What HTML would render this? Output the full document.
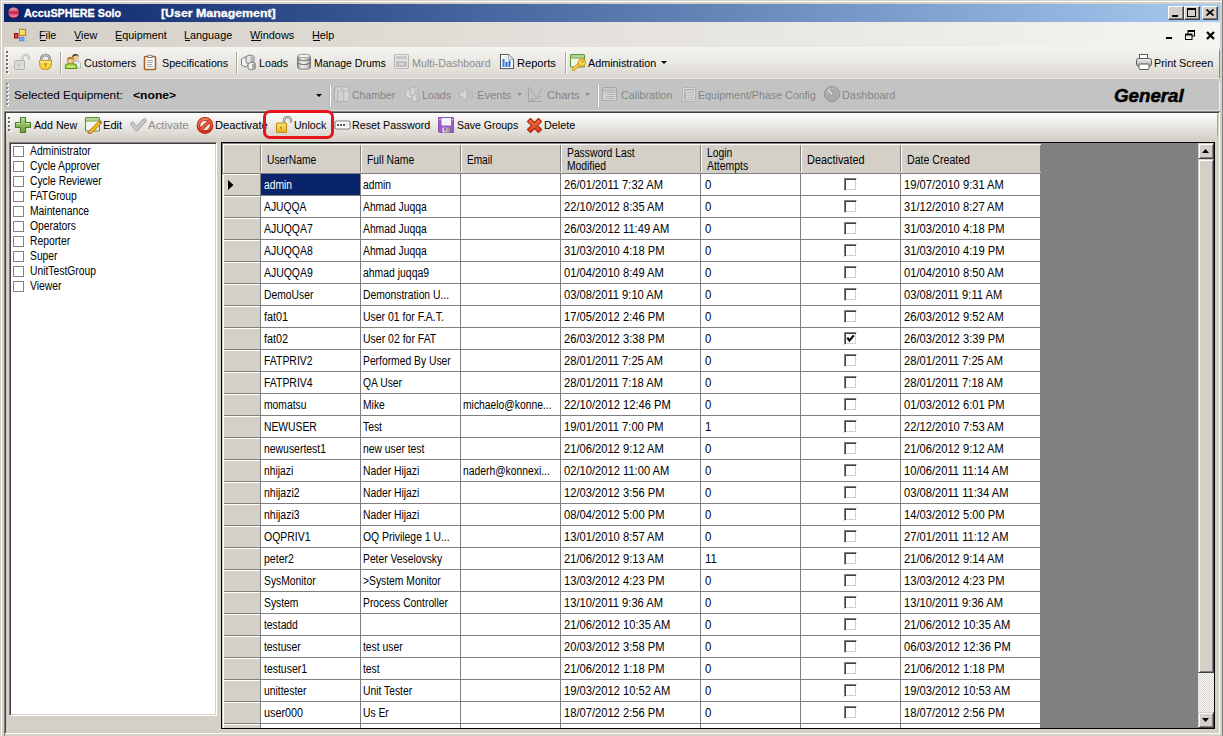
<!DOCTYPE html>
<html><head><meta charset="utf-8"><style>
html,body{margin:0;padding:0;width:1223px;height:736px;overflow:hidden;background:#D4D0C8}
body{position:relative;font-family:"Liberation Sans",sans-serif}
div,svg,span{position:absolute}
span{white-space:pre;line-height:1;transform-origin:0 0}
</style></head><body>
<div style="left:0px;top:0px;width:1223px;height:736px;background:#D4D0C8"></div>
<div style="left:1px;top:1px;width:1221px;height:1px;background:#fff"></div>
<div style="left:1px;top:1px;width:1px;height:735px;background:#fff"></div>
<div style="left:1222px;top:0px;width:1px;height:736px;background:#808080"></div>
<div style="left:4px;top:4px;width:1216px;height:18px;background:linear-gradient(to right,#0A246A,#A6CAF0)"></div>
<svg style="left:8px;top:7px" width="12" height="12" viewBox="0 0 12 12"><defs><linearGradient id="rb" x1="0" y1="0" x2="0" y2="1"><stop offset="0" stop-color="#C86A7A"/><stop offset="0.15" stop-color="#DC9AA8"/><stop offset="0.5" stop-color="#C81E40"/><stop offset="0.85" stop-color="#FF7C9C"/><stop offset="1" stop-color="#E8145A"/></linearGradient></defs><circle cx="5.6" cy="5.6" r="5.3" fill="url(#rb)"/><path d="M1.5 10 A5.3 5.3 0 0 0 9.7 10" stroke="#300818" stroke-width="0.8" fill="none" opacity="0.6"/></svg>
<div style="left:1168px;top:6px;width:16px;height:14px;background:#D4D0C8;box-sizing:border-box;border-top:1px solid #fff;border-left:1px solid #fff;border-right:1px solid #404040;border-bottom:1px solid #404040;box-shadow:inset -1px -1px 0 #808080"></div>
<div style="left:1184px;top:6px;width:16px;height:14px;background:#D4D0C8;box-sizing:border-box;border-top:1px solid #fff;border-left:1px solid #fff;border-right:1px solid #404040;border-bottom:1px solid #404040;box-shadow:inset -1px -1px 0 #808080"></div>
<div style="left:1202px;top:6px;width:16px;height:14px;background:#D4D0C8;box-sizing:border-box;border-top:1px solid #fff;border-left:1px solid #fff;border-right:1px solid #404040;border-bottom:1px solid #404040;box-shadow:inset -1px -1px 0 #808080"></div>
<div style="left:1172px;top:15px;width:6px;height:2px;background:#000"></div>
<div style="left:1187px;top:8px;width:9px;height:9px;box-sizing:border-box;border:1px solid #000;border-top-width:2px"></div>
<svg style="left:1206px;top:9px" width="8" height="7" viewBox="0 0 8 7"><path d="M0.5 0.5 L7.5 6.5 M7.5 0.5 L0.5 6.5" stroke="#000" stroke-width="1.6"/></svg>
<div style="left:4px;top:22px;width:1216px;height:25px;background:linear-gradient(to right,#D4D0C8,#F5F4F1)"></div>
<div style="left:40px;top:40px;width:6px;height:1px;background:#000"></div>
<div style="left:75px;top:40px;width:6px;height:1px;background:#000"></div>
<div style="left:116px;top:40px;width:6px;height:1px;background:#000"></div>
<div style="left:185px;top:40px;width:5px;height:1px;background:#000"></div>
<div style="left:251px;top:40px;width:10px;height:1px;background:#000"></div>
<div style="left:313px;top:40px;width:7px;height:1px;background:#000"></div>
<div style="left:1166px;top:37px;width:6px;height:2px;background:#000"></div>
<svg style="left:1185px;top:30px" width="10" height="10" viewBox="0 0 10 10"><rect x="3" y="0.5" width="6.5" height="5.5" fill="none" stroke="#000"/><rect x="3" y="0.5" width="6.5" height="1.5" fill="#000"/><rect x="0.5" y="4" width="6.5" height="5.5" fill="#F2F1EE" stroke="#000"/><rect x="0.5" y="4" width="6.5" height="1.5" fill="#000"/></svg>
<svg style="left:1206px;top:31px" width="9" height="9" viewBox="0 0 9 9"><path d="M1 1 L8 8 M8 1 L1 8" stroke="#000" stroke-width="2.2"/></svg>
<div style="left:4px;top:47px;width:1215px;height:31px;background:linear-gradient(to bottom,#F5F4F1 0%,#EAE8E3 50%,#DAD7CF 100%)"></div>
<div style="left:4px;top:78px;width:1215px;height:1px;background:#E8E6E0"></div>
<div style="left:1219px;top:50px;width:1px;height:28px;background:#8A8A8A"></div>
<div style="left:6px;top:51px;width:2px;height:2px;background:#6E6E6E;box-shadow:1px 1px 0 #fff"></div>
<div style="left:6px;top:55px;width:2px;height:2px;background:#6E6E6E;box-shadow:1px 1px 0 #fff"></div>
<div style="left:6px;top:59px;width:2px;height:2px;background:#6E6E6E;box-shadow:1px 1px 0 #fff"></div>
<div style="left:6px;top:63px;width:2px;height:2px;background:#6E6E6E;box-shadow:1px 1px 0 #fff"></div>
<div style="left:6px;top:67px;width:2px;height:2px;background:#6E6E6E;box-shadow:1px 1px 0 #fff"></div>
<div style="left:6px;top:71px;width:2px;height:2px;background:#6E6E6E;box-shadow:1px 1px 0 #fff"></div>
<div style="left:60px;top:52px;width:1px;height:22px;background:#A9A7A0"></div>
<div style="left:61px;top:52px;width:1px;height:22px;background:#fff"></div>
<div style="left:236px;top:52px;width:1px;height:22px;background:#A9A7A0"></div>
<div style="left:237px;top:52px;width:1px;height:22px;background:#fff"></div>
<div style="left:565px;top:52px;width:1px;height:22px;background:#A9A7A0"></div>
<div style="left:566px;top:52px;width:1px;height:22px;background:#fff"></div>
<svg style="left:661px;top:61px" width="7" height="4" viewBox="0 0 7 4"><path d="M0 0 H6 L3 3 Z" fill="#000"/></svg>
<div style="left:4px;top:79px;width:1215px;height:31px;background:#C3C3C3"></div>
<div style="left:4px;top:110px;width:1215px;height:1px;background:#E0DED8"></div>
<div style="left:1219px;top:82px;width:1px;height:28px;background:#F4F4F4"></div>
<div style="left:6px;top:83px;width:2px;height:2px;background:#8C8C8C;box-shadow:1px 1px 0 #fff"></div>
<div style="left:6px;top:87px;width:2px;height:2px;background:#8C8C8C;box-shadow:1px 1px 0 #fff"></div>
<div style="left:6px;top:91px;width:2px;height:2px;background:#8C8C8C;box-shadow:1px 1px 0 #fff"></div>
<div style="left:6px;top:95px;width:2px;height:2px;background:#8C8C8C;box-shadow:1px 1px 0 #fff"></div>
<div style="left:6px;top:99px;width:2px;height:2px;background:#8C8C8C;box-shadow:1px 1px 0 #fff"></div>
<div style="left:6px;top:103px;width:2px;height:2px;background:#8C8C8C;box-shadow:1px 1px 0 #fff"></div>
<svg style="left:316px;top:94px" width="7" height="4" viewBox="0 0 7 4"><path d="M0 0 H6 L3 3 Z" fill="#000"/></svg>
<div style="left:329px;top:85px;width:1px;height:22px;background:#B4B4B4"></div>
<div style="left:330px;top:85px;width:1px;height:22px;background:#fff"></div>
<div style="left:597px;top:85px;width:1px;height:22px;background:#B4B4B4"></div>
<div style="left:598px;top:85px;width:1px;height:22px;background:#fff"></div>
<svg style="left:517px;top:93px" width="6" height="4" viewBox="0 0 6 4"><path d="M0 0 H5 L2.5 3 Z" fill="#8E8E8E"/></svg>
<svg style="left:585px;top:93px" width="6" height="4" viewBox="0 0 6 4"><path d="M0 0 H5 L2.5 3 Z" fill="#8E8E8E"/></svg>
<div style="left:4px;top:111px;width:1216px;height:1px;background:#808080"></div>
<div style="left:5px;top:112px;width:1214px;height:1px;background:#404040"></div>
<div style="left:4px;top:111px;width:1px;height:625px;background:#808080"></div>
<div style="left:5px;top:112px;width:1px;height:621px;background:#404040"></div>
<div style="left:5px;top:733px;width:1215px;height:1px;background:#fff"></div>
<div style="left:1219px;top:112px;width:1px;height:622px;background:#fff"></div>
<div style="left:6px;top:113px;width:1211px;height:25px;background:linear-gradient(to bottom,#FDFDFC 0%,#EDEBE7 45%,#D6D3CB 100%)"></div>
<div style="left:8px;top:117px;width:2px;height:2px;background:#6E6E6E;box-shadow:1px 1px 0 #fff"></div>
<div style="left:8px;top:121px;width:2px;height:2px;background:#6E6E6E;box-shadow:1px 1px 0 #fff"></div>
<div style="left:8px;top:125px;width:2px;height:2px;background:#6E6E6E;box-shadow:1px 1px 0 #fff"></div>
<div style="left:8px;top:129px;width:2px;height:2px;background:#6E6E6E;box-shadow:1px 1px 0 #fff"></div>
<div style="left:1217px;top:115px;width:1px;height:21px;background:#A8A8A8"></div>
<div style="left:9px;top:142px;width:208px;height:574px;background:#fff;box-sizing:border-box;border-style:solid;border-width:1px;border-color:#808080 #fff #fff #808080;box-shadow:inset 1px 1px 0 #404040, inset -1px -1px 0 #D4D0C8"></div>
<div style="left:13px;top:146px;width:11px;height:11px;box-sizing:border-box;border:1px solid #848284;background:#fff"></div>
<div style="left:13px;top:161px;width:11px;height:11px;box-sizing:border-box;border:1px solid #848284;background:#fff"></div>
<div style="left:13px;top:176px;width:11px;height:11px;box-sizing:border-box;border:1px solid #848284;background:#fff"></div>
<div style="left:13px;top:191px;width:11px;height:11px;box-sizing:border-box;border:1px solid #848284;background:#fff"></div>
<div style="left:13px;top:206px;width:11px;height:11px;box-sizing:border-box;border:1px solid #848284;background:#fff"></div>
<div style="left:13px;top:221px;width:11px;height:11px;box-sizing:border-box;border:1px solid #848284;background:#fff"></div>
<div style="left:13px;top:236px;width:11px;height:11px;box-sizing:border-box;border:1px solid #848284;background:#fff"></div>
<div style="left:13px;top:251px;width:11px;height:11px;box-sizing:border-box;border:1px solid #848284;background:#fff"></div>
<div style="left:13px;top:266px;width:11px;height:11px;box-sizing:border-box;border:1px solid #848284;background:#fff"></div>
<div style="left:13px;top:281px;width:11px;height:11px;box-sizing:border-box;border:1px solid #848284;background:#fff"></div>
<div style="left:221px;top:142px;width:994px;height:587px;background:#808080;box-sizing:border-box;border:1px solid #000"></div>
<div style="left:222px;top:143px;width:819px;height:31px;background:#D4D0C8"></div>
<div style="left:222px;top:143px;width:819px;height:1px;background:#808080"></div>
<div style="left:222px;top:143px;width:1px;height:585px;background:#808080"></div>
<div style="left:223px;top:144px;width:818px;height:1px;background:#fff"></div>
<div style="left:223px;top:144px;width:1px;height:29px;background:#fff"></div>
<div style="left:223px;top:173px;width:818px;height:1px;background:#808080"></div>
<div style="left:260px;top:145px;width:1px;height:27px;background:#808080"></div>
<div style="left:261px;top:145px;width:1px;height:27px;background:#fff"></div>
<div style="left:360px;top:145px;width:1px;height:27px;background:#808080"></div>
<div style="left:361px;top:145px;width:1px;height:27px;background:#fff"></div>
<div style="left:460px;top:145px;width:1px;height:27px;background:#808080"></div>
<div style="left:461px;top:145px;width:1px;height:27px;background:#fff"></div>
<div style="left:560px;top:145px;width:1px;height:27px;background:#808080"></div>
<div style="left:561px;top:145px;width:1px;height:27px;background:#fff"></div>
<div style="left:700px;top:145px;width:1px;height:27px;background:#808080"></div>
<div style="left:701px;top:145px;width:1px;height:27px;background:#fff"></div>
<div style="left:800px;top:145px;width:1px;height:27px;background:#808080"></div>
<div style="left:801px;top:145px;width:1px;height:27px;background:#fff"></div>
<div style="left:900px;top:145px;width:1px;height:27px;background:#808080"></div>
<div style="left:901px;top:145px;width:1px;height:27px;background:#fff"></div>
<div style="left:1040px;top:145px;width:1px;height:27px;background:#808080"></div>
<div style="left:261px;top:174px;width:780px;height:554px;background:#fff"></div>
<div style="left:222px;top:174px;width:39px;height:554px;background:#D4D0C8"></div>
<div style="left:223px;top:174px;width:37px;height:1px;background:#fff"></div>
<div style="left:223px;top:195px;width:37px;height:1px;background:#808080"></div>
<div style="left:261px;top:195px;width:780px;height:1px;background:#808080"></div>
<div style="left:223px;top:196px;width:37px;height:1px;background:#fff"></div>
<div style="left:223px;top:217px;width:37px;height:1px;background:#808080"></div>
<div style="left:261px;top:217px;width:780px;height:1px;background:#808080"></div>
<div style="left:223px;top:218px;width:37px;height:1px;background:#fff"></div>
<div style="left:223px;top:239px;width:37px;height:1px;background:#808080"></div>
<div style="left:261px;top:239px;width:780px;height:1px;background:#808080"></div>
<div style="left:223px;top:240px;width:37px;height:1px;background:#fff"></div>
<div style="left:223px;top:261px;width:37px;height:1px;background:#808080"></div>
<div style="left:261px;top:261px;width:780px;height:1px;background:#808080"></div>
<div style="left:223px;top:262px;width:37px;height:1px;background:#fff"></div>
<div style="left:223px;top:283px;width:37px;height:1px;background:#808080"></div>
<div style="left:261px;top:283px;width:780px;height:1px;background:#808080"></div>
<div style="left:223px;top:284px;width:37px;height:1px;background:#fff"></div>
<div style="left:223px;top:305px;width:37px;height:1px;background:#808080"></div>
<div style="left:261px;top:305px;width:780px;height:1px;background:#808080"></div>
<div style="left:223px;top:306px;width:37px;height:1px;background:#fff"></div>
<div style="left:223px;top:327px;width:37px;height:1px;background:#808080"></div>
<div style="left:261px;top:327px;width:780px;height:1px;background:#808080"></div>
<div style="left:223px;top:328px;width:37px;height:1px;background:#fff"></div>
<div style="left:223px;top:349px;width:37px;height:1px;background:#808080"></div>
<div style="left:261px;top:349px;width:780px;height:1px;background:#808080"></div>
<div style="left:223px;top:350px;width:37px;height:1px;background:#fff"></div>
<div style="left:223px;top:371px;width:37px;height:1px;background:#808080"></div>
<div style="left:261px;top:371px;width:780px;height:1px;background:#808080"></div>
<div style="left:223px;top:372px;width:37px;height:1px;background:#fff"></div>
<div style="left:223px;top:393px;width:37px;height:1px;background:#808080"></div>
<div style="left:261px;top:393px;width:780px;height:1px;background:#808080"></div>
<div style="left:223px;top:394px;width:37px;height:1px;background:#fff"></div>
<div style="left:223px;top:415px;width:37px;height:1px;background:#808080"></div>
<div style="left:261px;top:415px;width:780px;height:1px;background:#808080"></div>
<div style="left:223px;top:416px;width:37px;height:1px;background:#fff"></div>
<div style="left:223px;top:437px;width:37px;height:1px;background:#808080"></div>
<div style="left:261px;top:437px;width:780px;height:1px;background:#808080"></div>
<div style="left:223px;top:438px;width:37px;height:1px;background:#fff"></div>
<div style="left:223px;top:459px;width:37px;height:1px;background:#808080"></div>
<div style="left:261px;top:459px;width:780px;height:1px;background:#808080"></div>
<div style="left:223px;top:460px;width:37px;height:1px;background:#fff"></div>
<div style="left:223px;top:481px;width:37px;height:1px;background:#808080"></div>
<div style="left:261px;top:481px;width:780px;height:1px;background:#808080"></div>
<div style="left:223px;top:482px;width:37px;height:1px;background:#fff"></div>
<div style="left:223px;top:503px;width:37px;height:1px;background:#808080"></div>
<div style="left:261px;top:503px;width:780px;height:1px;background:#808080"></div>
<div style="left:223px;top:504px;width:37px;height:1px;background:#fff"></div>
<div style="left:223px;top:525px;width:37px;height:1px;background:#808080"></div>
<div style="left:261px;top:525px;width:780px;height:1px;background:#808080"></div>
<div style="left:223px;top:526px;width:37px;height:1px;background:#fff"></div>
<div style="left:223px;top:547px;width:37px;height:1px;background:#808080"></div>
<div style="left:261px;top:547px;width:780px;height:1px;background:#808080"></div>
<div style="left:223px;top:548px;width:37px;height:1px;background:#fff"></div>
<div style="left:223px;top:569px;width:37px;height:1px;background:#808080"></div>
<div style="left:261px;top:569px;width:780px;height:1px;background:#808080"></div>
<div style="left:223px;top:570px;width:37px;height:1px;background:#fff"></div>
<div style="left:223px;top:591px;width:37px;height:1px;background:#808080"></div>
<div style="left:261px;top:591px;width:780px;height:1px;background:#808080"></div>
<div style="left:223px;top:592px;width:37px;height:1px;background:#fff"></div>
<div style="left:223px;top:613px;width:37px;height:1px;background:#808080"></div>
<div style="left:261px;top:613px;width:780px;height:1px;background:#808080"></div>
<div style="left:223px;top:614px;width:37px;height:1px;background:#fff"></div>
<div style="left:223px;top:635px;width:37px;height:1px;background:#808080"></div>
<div style="left:261px;top:635px;width:780px;height:1px;background:#808080"></div>
<div style="left:223px;top:636px;width:37px;height:1px;background:#fff"></div>
<div style="left:223px;top:657px;width:37px;height:1px;background:#808080"></div>
<div style="left:261px;top:657px;width:780px;height:1px;background:#808080"></div>
<div style="left:223px;top:658px;width:37px;height:1px;background:#fff"></div>
<div style="left:223px;top:679px;width:37px;height:1px;background:#808080"></div>
<div style="left:261px;top:679px;width:780px;height:1px;background:#808080"></div>
<div style="left:223px;top:680px;width:37px;height:1px;background:#fff"></div>
<div style="left:223px;top:701px;width:37px;height:1px;background:#808080"></div>
<div style="left:261px;top:701px;width:780px;height:1px;background:#808080"></div>
<div style="left:223px;top:702px;width:37px;height:1px;background:#fff"></div>
<div style="left:223px;top:723px;width:37px;height:1px;background:#808080"></div>
<div style="left:261px;top:723px;width:780px;height:1px;background:#808080"></div>
<div style="left:223px;top:724px;width:37px;height:1px;background:#fff"></div>
<div style="left:223px;top:174px;width:1px;height:554px;background:#fff"></div>
<div style="left:260px;top:174px;width:1px;height:554px;background:#808080"></div>
<div style="left:360px;top:174px;width:1px;height:554px;background:#808080"></div>
<div style="left:460px;top:174px;width:1px;height:554px;background:#808080"></div>
<div style="left:560px;top:174px;width:1px;height:554px;background:#808080"></div>
<div style="left:700px;top:174px;width:1px;height:554px;background:#808080"></div>
<div style="left:800px;top:174px;width:1px;height:554px;background:#808080"></div>
<div style="left:900px;top:174px;width:1px;height:554px;background:#808080"></div>
<div style="left:1040px;top:174px;width:1px;height:554px;background:#808080"></div>
<div style="left:261px;top:174px;width:99px;height:21px;background:#0A246A"></div>
<svg style="left:228px;top:180px" width="6" height="10" viewBox="0 0 6 10"><path d="M0 0 L5.5 5 L0 10 Z" fill="#000"/></svg>
<div style="left:844px;top:178px;width:13px;height:13px;box-sizing:border-box;border-style:solid;border-width:1px;border-color:#808080 #fff #fff #808080;box-shadow:inset 1px 1px 0 #404040, inset -1px -1px 0 #D4D0C8;background:#fff"></div>
<div style="left:844px;top:200px;width:13px;height:13px;box-sizing:border-box;border-style:solid;border-width:1px;border-color:#808080 #fff #fff #808080;box-shadow:inset 1px 1px 0 #404040, inset -1px -1px 0 #D4D0C8;background:#fff"></div>
<div style="left:844px;top:222px;width:13px;height:13px;box-sizing:border-box;border-style:solid;border-width:1px;border-color:#808080 #fff #fff #808080;box-shadow:inset 1px 1px 0 #404040, inset -1px -1px 0 #D4D0C8;background:#fff"></div>
<div style="left:844px;top:244px;width:13px;height:13px;box-sizing:border-box;border-style:solid;border-width:1px;border-color:#808080 #fff #fff #808080;box-shadow:inset 1px 1px 0 #404040, inset -1px -1px 0 #D4D0C8;background:#fff"></div>
<div style="left:844px;top:266px;width:13px;height:13px;box-sizing:border-box;border-style:solid;border-width:1px;border-color:#808080 #fff #fff #808080;box-shadow:inset 1px 1px 0 #404040, inset -1px -1px 0 #D4D0C8;background:#fff"></div>
<div style="left:844px;top:288px;width:13px;height:13px;box-sizing:border-box;border-style:solid;border-width:1px;border-color:#808080 #fff #fff #808080;box-shadow:inset 1px 1px 0 #404040, inset -1px -1px 0 #D4D0C8;background:#fff"></div>
<div style="left:844px;top:310px;width:13px;height:13px;box-sizing:border-box;border-style:solid;border-width:1px;border-color:#808080 #fff #fff #808080;box-shadow:inset 1px 1px 0 #404040, inset -1px -1px 0 #D4D0C8;background:#fff"></div>
<div style="left:844px;top:332px;width:13px;height:13px;box-sizing:border-box;border-style:solid;border-width:1px;border-color:#808080 #fff #fff #808080;box-shadow:inset 1px 1px 0 #404040, inset -1px -1px 0 #D4D0C8;background:#fff"></div>
<svg style="left:844px;top:332px" width="13" height="13" viewBox="0 0 13 13"><path d="M3.3 5.6 L5.4 8.6 L9.8 3.4" stroke="#000" stroke-width="2.1" fill="none"/></svg>
<div style="left:844px;top:354px;width:13px;height:13px;box-sizing:border-box;border-style:solid;border-width:1px;border-color:#808080 #fff #fff #808080;box-shadow:inset 1px 1px 0 #404040, inset -1px -1px 0 #D4D0C8;background:#fff"></div>
<div style="left:844px;top:376px;width:13px;height:13px;box-sizing:border-box;border-style:solid;border-width:1px;border-color:#808080 #fff #fff #808080;box-shadow:inset 1px 1px 0 #404040, inset -1px -1px 0 #D4D0C8;background:#fff"></div>
<div style="left:844px;top:398px;width:13px;height:13px;box-sizing:border-box;border-style:solid;border-width:1px;border-color:#808080 #fff #fff #808080;box-shadow:inset 1px 1px 0 #404040, inset -1px -1px 0 #D4D0C8;background:#fff"></div>
<div style="left:844px;top:420px;width:13px;height:13px;box-sizing:border-box;border-style:solid;border-width:1px;border-color:#808080 #fff #fff #808080;box-shadow:inset 1px 1px 0 #404040, inset -1px -1px 0 #D4D0C8;background:#fff"></div>
<div style="left:844px;top:442px;width:13px;height:13px;box-sizing:border-box;border-style:solid;border-width:1px;border-color:#808080 #fff #fff #808080;box-shadow:inset 1px 1px 0 #404040, inset -1px -1px 0 #D4D0C8;background:#fff"></div>
<div style="left:844px;top:464px;width:13px;height:13px;box-sizing:border-box;border-style:solid;border-width:1px;border-color:#808080 #fff #fff #808080;box-shadow:inset 1px 1px 0 #404040, inset -1px -1px 0 #D4D0C8;background:#fff"></div>
<div style="left:844px;top:486px;width:13px;height:13px;box-sizing:border-box;border-style:solid;border-width:1px;border-color:#808080 #fff #fff #808080;box-shadow:inset 1px 1px 0 #404040, inset -1px -1px 0 #D4D0C8;background:#fff"></div>
<div style="left:844px;top:508px;width:13px;height:13px;box-sizing:border-box;border-style:solid;border-width:1px;border-color:#808080 #fff #fff #808080;box-shadow:inset 1px 1px 0 #404040, inset -1px -1px 0 #D4D0C8;background:#fff"></div>
<div style="left:844px;top:530px;width:13px;height:13px;box-sizing:border-box;border-style:solid;border-width:1px;border-color:#808080 #fff #fff #808080;box-shadow:inset 1px 1px 0 #404040, inset -1px -1px 0 #D4D0C8;background:#fff"></div>
<div style="left:844px;top:552px;width:13px;height:13px;box-sizing:border-box;border-style:solid;border-width:1px;border-color:#808080 #fff #fff #808080;box-shadow:inset 1px 1px 0 #404040, inset -1px -1px 0 #D4D0C8;background:#fff"></div>
<div style="left:844px;top:574px;width:13px;height:13px;box-sizing:border-box;border-style:solid;border-width:1px;border-color:#808080 #fff #fff #808080;box-shadow:inset 1px 1px 0 #404040, inset -1px -1px 0 #D4D0C8;background:#fff"></div>
<div style="left:844px;top:596px;width:13px;height:13px;box-sizing:border-box;border-style:solid;border-width:1px;border-color:#808080 #fff #fff #808080;box-shadow:inset 1px 1px 0 #404040, inset -1px -1px 0 #D4D0C8;background:#fff"></div>
<div style="left:844px;top:618px;width:13px;height:13px;box-sizing:border-box;border-style:solid;border-width:1px;border-color:#808080 #fff #fff #808080;box-shadow:inset 1px 1px 0 #404040, inset -1px -1px 0 #D4D0C8;background:#fff"></div>
<div style="left:844px;top:640px;width:13px;height:13px;box-sizing:border-box;border-style:solid;border-width:1px;border-color:#808080 #fff #fff #808080;box-shadow:inset 1px 1px 0 #404040, inset -1px -1px 0 #D4D0C8;background:#fff"></div>
<div style="left:844px;top:662px;width:13px;height:13px;box-sizing:border-box;border-style:solid;border-width:1px;border-color:#808080 #fff #fff #808080;box-shadow:inset 1px 1px 0 #404040, inset -1px -1px 0 #D4D0C8;background:#fff"></div>
<div style="left:844px;top:684px;width:13px;height:13px;box-sizing:border-box;border-style:solid;border-width:1px;border-color:#808080 #fff #fff #808080;box-shadow:inset 1px 1px 0 #404040, inset -1px -1px 0 #D4D0C8;background:#fff"></div>
<div style="left:844px;top:706px;width:13px;height:13px;box-sizing:border-box;border-style:solid;border-width:1px;border-color:#808080 #fff #fff #808080;box-shadow:inset 1px 1px 0 #404040, inset -1px -1px 0 #D4D0C8;background:#fff"></div>
<div style="left:1198px;top:143px;width:16px;height:585px;background:#D4D0C8"></div>
<div style="left:1198px;top:143px;width:16px;height:16px;background:#D4D0C8;box-sizing:border-box;border-style:solid;border-width:1px;border-color:#D4D0C8 #404040 #404040 #D4D0C8;box-shadow:inset 1px 1px 0 #fff, inset -1px -1px 0 #808080"></div>
<div style="left:1198px;top:159px;width:16px;height:514px;background:#D4D0C8;box-sizing:border-box;border-style:solid;border-width:1px;border-color:#D4D0C8 #404040 #404040 #D4D0C8;box-shadow:inset 1px 1px 0 #fff, inset -1px -1px 0 #808080"></div>
<div style="left:1198px;top:673px;width:16px;height:39px;background-color:#fff;background-image:repeating-conic-gradient(#D4D0C8 0 25%,#fff 0 50%);background-size:2px 2px"></div>
<div style="left:1198px;top:712px;width:16px;height:16px;background:#D4D0C8;box-sizing:border-box;border-style:solid;border-width:1px;border-color:#D4D0C8 #404040 #404040 #D4D0C8;box-shadow:inset 1px 1px 0 #fff, inset -1px -1px 0 #808080"></div>
<svg style="left:1202px;top:149px" width="8" height="4" viewBox="0 0 8 4"><path d="M3.5 0 L7 4 L0 4 Z" fill="#000"/></svg>
<svg style="left:1202px;top:718px" width="8" height="4" viewBox="0 0 8 4"><path d="M0 0 L7 0 L3.5 4 Z" fill="#000"/></svg>
<svg style="left:13px;top:28px" width="15" height="15" viewBox="0 0 15 15"><rect x="0.5" y="0.5" width="13" height="13" fill="#DAD8D2" stroke="#C4C6C8"/>
<path d="M0.5 5 H5 M0.5 10 H13.5 M3 0.5 V13.5 M11 10 V13.5" stroke="#D0D0CC" stroke-width="1"/>
<defs><linearGradient id="yg" x1="0" y1="0" x2="1" y2="1"><stop offset="0" stop-color="#FFF0B0"/><stop offset="1" stop-color="#FFC810"/></linearGradient></defs>
<rect x="6.5" y="1.5" width="6" height="6" fill="url(#yg)" stroke="#B88A10"/>
<rect x="1.5" y="5.5" width="3.5" height="4.5" fill="#E04040" stroke="#A01010"/>
<rect x="6.2" y="9.2" width="4.8" height="3.6" fill="#6AA8F0" stroke="#3A78D8" stroke-width="0.6"/></svg>
<svg style="left:13px;top:53px" width="18" height="18" viewBox="0 0 18 18"><path d="M9.5 7.5 V5 A3.2 3.2 0 0 1 16 5 V7" fill="none" stroke="#B4B4B4" stroke-width="2.2"/>
<path d="M9.5 7.5 V5 A3.2 3.2 0 0 1 16 5 V7" fill="none" stroke="#F0F0F0" stroke-width="0.7"/>
<rect x="1.5" y="7.5" width="10" height="9" rx="1" fill="#DADADA" stroke="#B2B2B2"/>
<path d="M6.5 11 L5 12 L6.5 13" stroke="#B8B8B8" fill="none"/></svg>
<svg style="left:38px;top:53px" width="16" height="18" viewBox="0 0 16 18"><path d="M3.2 8 V6.3 A4.3 4.3 0 0 1 11.8 6.3 V8" fill="none" stroke="#7E7E7E" stroke-width="2.6"/>
<path d="M3.2 8 V6.3 A4.3 4.3 0 0 1 11.8 6.3 V8" fill="none" stroke="#E8E8E8" stroke-width="0.9"/>
<path d="M1.5 7.5 H13.5 V10 C13.5 14 11 16.5 7.5 16.5 C4 16.5 1.5 14 1.5 10 Z" fill="#F6D84A" stroke="#D49A10" stroke-width="1.1"/>
<rect x="2.2" y="8.2" width="10.6" height="1.2" fill="#FDF2A8"/>
<circle cx="7.5" cy="11" r="1.2" fill="#C88A10"/><rect x="6.9" y="11" width="1.2" height="2.8" fill="#C88A10"/></svg>
<svg style="left:64px;top:53px" width="18" height="17" viewBox="0 0 18 17"><path d="M8.5 15 V11.5 C8.5 9 10 8 12.5 8 C15 8 16.5 9 16.5 11.5 V15 Z" fill="#E8F0F0" stroke="#A8B4B4"/>
<circle cx="11.5" cy="4.5" r="3.2" fill="#F0C898"/><path d="M8.2 4.5 A3.3 3.3 0 0 1 14.8 4 L14 3 C12 2 10 2.5 8.5 5 Z" fill="#4A3C28"/>
<path d="M1.5 15.5 V13 C1.5 11 3 10.5 6.5 10.5 C10 10.5 12.5 11 12.5 13 V15.5 Z" fill="#A8D448" stroke="#5A9418" stroke-width="1.1"/>
<rect x="3" y="13" width="8" height="1.3" fill="#D4F080"/>
<circle cx="6.5" cy="7.5" r="3.2" fill="#F2CCA0" stroke="#B8801C" stroke-width="0.8"/><path d="M3.2 7.5 A3.3 3.3 0 0 1 9.8 7 C8 5.5 5 5.5 3.2 7.5 Z" fill="#B07A1C"/></svg>
<svg style="left:143px;top:54px" width="15" height="17" viewBox="0 0 15 17"><rect x="1.5" y="2.5" width="11" height="13" rx="1" fill="#fff" stroke="#A8621E" stroke-width="1.6"/>
<rect x="3" y="4" width="8" height="10" fill="#FCFCFC"/>
<path d="M4.5 3.5 V2 H6 A1 1 0 0 1 8 2 H9.5 V3.5 Z" fill="#fff" stroke="#7A7A7A"/>
<path d="M4 6.5 H10 M4 8.5 H10 M4 10.5 H9 M4 12.5 H10" stroke="#9A9A9A" stroke-width="0.9"/></svg>
<svg style="left:240px;top:54px" width="17" height="17" viewBox="0 0 17 17"><path d="M1.5 5 L5 3 L9 5 V11 L5 13 L1.5 11 Z" fill="#F4F4F4" stroke="#7C7C7C"/>
<path d="M6 2.5 L10 0.8 L14 2.5 V8.5 L10 10.5 L6 8.5 Z" fill="#E6E6E6" stroke="#7C7C7C"/>
<path d="M10.5 2.5 L14 2.5 V8.5 L10.5 10 Z" fill="#B4B4B4"/>
<path d="M8 9.5 L12 8 L15.5 9.5 V14.5 L12 16 L8 14.5 Z" fill="#F2F2F2" stroke="#7C7C7C"/>
<path d="M12 9.7 L15.5 9.5 V14.5 L12 16 Z" fill="#A8A8A8"/></svg>
<svg style="left:296px;top:53px" width="16" height="17" viewBox="0 0 16 17"><defs><linearGradient id="dg" x1="0" x2="1"><stop offset="0" stop-color="#9A9A9A"/><stop offset="0.35" stop-color="#F4F4F4"/><stop offset="0.7" stop-color="#D8D8D8"/><stop offset="1" stop-color="#8C8C8C"/></linearGradient></defs>
<rect x="1.5" y="2" width="13" height="14" rx="3" fill="url(#dg)" stroke="#7A7A7A"/>
<ellipse cx="8" cy="3" rx="6.3" ry="1.8" fill="#F0F0F0" stroke="#8A8A8A" stroke-width="0.8"/>
<path d="M1.8 6.5 Q8 9 14.2 6.5 M1.8 10.5 Q8 13 14.2 10.5" stroke="#6E6E6E" fill="none" stroke-width="1"/></svg>
<svg style="left:393px;top:53px" width="17" height="17" viewBox="0 0 17 17"><rect x="1.5" y="1.5" width="14" height="14" rx="1.5" fill="#EAEAEA" stroke="#B8B8B8" stroke-width="1.2"/>
<rect x="3" y="3" width="11" height="3.5" fill="#C8C8C8"/><rect x="3" y="8" width="11" height="6" fill="#BEBEBE"/><rect x="6" y="10.5" width="5" height="1" fill="#F2F2F2"/></svg>
<svg style="left:499px;top:53px" width="16" height="17" viewBox="0 0 16 17"><path d="M1.5 1.5 H9.5 L14.5 6.5 V15.5 H1.5 Z" fill="#fff" stroke="#5A5A5A" stroke-width="1.1"/>
<path d="M9.5 1.5 V6.5 H14.5" fill="#E8E8E8" stroke="#9A9A9A" stroke-width="0.7"/>
<rect x="3.5" y="3" width="5" height="11" fill="#ECECEC"/>
<rect x="3.5" y="6" width="2" height="8" fill="#3A82E0"/><rect x="6.5" y="9" width="2" height="5" fill="#2A6CD0"/><rect x="9.5" y="7.5" width="2" height="6.5" fill="#2A6CD0"/></svg>
<svg style="left:569px;top:53px" width="18" height="18" viewBox="0 0 18 18"><rect x="1.5" y="1.5" width="14" height="12.5" rx="1" fill="#F4F8EC" stroke="#5C9A34" stroke-width="1.1"/>
<rect x="2" y="2" width="13" height="2.6" fill="#B4D49C"/>
<path d="M2 5 H15" stroke="#6AA040"/>
<path d="M4.5 16.5 L10 11" stroke="#D49A10" stroke-width="3.2" stroke-linecap="round"/>
<path d="M4.5 16.5 L10 11" stroke="#F8D860" stroke-width="1.6" stroke-linecap="round"/>
<circle cx="12.8" cy="9.5" r="3.6" fill="#F8D860" stroke="#D49A10" stroke-width="1.1"/><circle cx="13.5" cy="8.7" r="0.9" fill="#B07A10"/></svg>
<svg style="left:1135px;top:53px" width="18" height="18" viewBox="0 0 18 18"><rect x="4.5" y="1.5" width="8" height="6" fill="#fff" stroke="#5E5E5E"/>
<defs><linearGradient id="pg" x1="0" y1="0" x2="0" y2="1"><stop offset="0" stop-color="#F4F4F4"/><stop offset="1" stop-color="#A8A8A8"/></linearGradient></defs>
<rect x="1.5" y="5.5" width="15" height="7.5" rx="2" fill="url(#pg)" stroke="#5E5E5E"/>
<rect x="4" y="11" width="10" height="5.5" rx="1" fill="#fff" stroke="#5E5E5E"/></svg>
<svg style="left:333px;top:86px" width="17" height="17" viewBox="0 0 17 17"><path d="M1.5 2.5 L4 0.8 H14 L16 3 V14.5 L15 15.5 H4.5 L1.5 13 Z" fill="#D6D6D6" stroke="#ACACAC"/>
<path d="M4.5 15.5 V5 H16 M4.5 5 L1.8 2.6 M10.2 5 V15.5 M10.2 5 L7.5 1" stroke="#B0B0B0" fill="none"/>
<rect x="5" y="5.5" width="5" height="9.5" fill="#CFCFCF"/><rect x="10.7" y="5.5" width="5" height="9.5" fill="#D2D2D2"/></svg>
<svg style="left:404px;top:86px" width="17" height="17" viewBox="0 0 17 17"><path d="M1.5 5 L5 3 L9 5 V11 L5 13 L1.5 11 Z" fill="#D8D8D8" stroke="#B0B0B0"/>
<path d="M6 2.5 L10 0.8 L14 2.5 V8.5 L10 10.5 L6 8.5 Z" fill="#D4D4D4" stroke="#B0B0B0"/>
<path d="M10.5 2.5 L14 2.5 V8.5 L10.5 10 Z" fill="#C4C4C4"/>
<path d="M8 9.5 L12 8 L15.5 9.5 V14.5 L12 16 L8 14.5 Z" fill="#D8D8D8" stroke="#B0B0B0"/>
<path d="M12 9.7 L15.5 9.5 V14.5 L12 16 Z" fill="#BEBEBE"/></svg>
<svg style="left:458px;top:86px" width="17" height="17" viewBox="0 0 17 17"><path d="M1.5 6 H4.5 L9 2 V15 L4.5 11 H1.5 Z" fill="#D6D6D6" stroke="#B0B0B0"/>
<path d="M11 5.5 Q13 8.5 11 11.5 M13 3.5 Q16.5 8.5 13 13.5" stroke="#B4B4B4" fill="none" stroke-width="1.1"/></svg>
<svg style="left:527px;top:86px" width="17" height="17" viewBox="0 0 17 17"><path d="M1.5 1 V15.5 H16" stroke="#A4A4A4" fill="none" stroke-width="1.1"/>
<path d="M3.5 2 Q9 19 15 2" stroke="#A4A4A4" fill="none" stroke-width="0.9"/>
<path d="M3.5 13.5 Q10 13 15 10" stroke="#A4A4A4" fill="none" stroke-width="0.9"/>
<path d="M3 14 H7" stroke="#A0A0A0" stroke-width="1"/></svg>
<svg style="left:601px;top:86px" width="17" height="16" viewBox="0 0 17 16"><rect x="1.5" y="1.5" width="14" height="13" rx="0.8" fill="#DADADA" stroke="#A8A8A8" stroke-width="1.2"/>
<rect x="2.1" y="2.1" width="12.8" height="2.3" fill="#C6C6C6"/><path d="M2 4.8 H15" stroke="#ACACAC"/>
<path d="M3.5 6.5 H4.5 M5.5 6.5 H14 M3.5 8.5 H4.5 M5.5 8.5 H14 M3.5 10.5 H4.5 M5.5 10.5 H14 M3.5 12.5 H4.5 M5.5 12.5 H14" stroke="#AAAAAA" stroke-width="0.9"/></svg>
<svg style="left:681px;top:86px" width="16" height="17" viewBox="0 0 16 17"><rect x="1.5" y="1.5" width="13" height="14" rx="1" fill="#D8D8D8" stroke="#B4B4B4"/>
<rect x="3" y="3" width="10" height="1.5" fill="#AEAEAE"/><rect x="3" y="5.5" width="2" height="7" fill="#B0B0B0"/>
<path d="M6 6.5 H13 M6 9 H13 M6 11.5 H13 M3 13.7 H13" stroke="#B8B8B8"/></svg>
<svg style="left:823px;top:85px" width="18" height="18" viewBox="0 0 18 18"><circle cx="9" cy="9" r="7.7" fill="#A9A9A9" stroke="#999" stroke-width="1"/>
<path d="M5 5 L9 9" stroke="#E4E4E4" stroke-width="1.3"/>
<circle cx="6.5" cy="3.5" r="0.6" fill="#E0E0E0"/><circle cx="10" cy="3.2" r="0.6" fill="#E0E0E0"/><circle cx="13" cy="5" r="0.6" fill="#E0E0E0"/><circle cx="14" cy="8" r="0.6" fill="#E0E0E0"/><circle cx="3.5" cy="8" r="0.6" fill="#E0E0E0"/></svg>
<svg style="left:14px;top:116px" width="18" height="18" viewBox="0 0 18 18"><defs><linearGradient id="ag" x1="0" y1="0" x2="0" y2="1"><stop offset="0" stop-color="#B6D690"/><stop offset="1" stop-color="#6E9E3C"/></linearGradient></defs>
<path d="M6.5 1.5 H11.5 V6.5 H16.5 V11.5 H11.5 V16.5 H6.5 V11.5 H1.5 V6.5 H6.5 Z" fill="url(#ag)" stroke="#4E7E22" stroke-width="1.2" stroke-linejoin="round"/>
<path d="M7.5 2.5 H10.5 M2.5 7.5 H6 M12 7.5 H15.5" stroke="#DCEEC4" stroke-width="0.9"/></svg>
<svg style="left:84px;top:116px" width="18" height="18" viewBox="0 0 18 18"><rect x="1.5" y="1.5" width="14" height="13.5" rx="1" fill="#F2F6EA" stroke="#5C9434" stroke-width="1.1"/>
<rect x="2" y="2" width="13" height="2.6" fill="#B4D09C"/><path d="M2 5 H15" stroke="#6A9A40"/>
<path d="M6 16.5 L16 6.5" stroke="#C07830" stroke-width="4" stroke-linecap="square"/>
<path d="M6.3 16.2 L15.7 6.8" stroke="#F0C800" stroke-width="2.2"/>
<path d="M5 17.5 L6.5 14 L8.5 16 Z" fill="#F8E4C8" stroke="#C07830" stroke-width="0.6"/></svg>
<svg style="left:129px;top:118px" width="18" height="15" viewBox="0 0 18 15"><path d="M3.5 6 L7.5 11 L15.5 2.5" fill="none" stroke="#A8A8A8" stroke-width="4.4" stroke-linejoin="round" stroke-linecap="round"/>
<path d="M3.5 6 L7.5 11 L15.5 2.5" fill="none" stroke="#CBCBCB" stroke-width="2.4" stroke-linejoin="round" stroke-linecap="round"/></svg>
<svg style="left:196px;top:116px" width="18" height="18" viewBox="0 0 18 18"><defs><linearGradient id="rg" x1="0" y1="0" x2="0" y2="1"><stop offset="0" stop-color="#F08858"/><stop offset="1" stop-color="#D03010"/></linearGradient></defs>
<circle cx="9" cy="9.5" r="6.6" fill="none" stroke="#B81E0E" stroke-width="3.6"/>
<circle cx="9" cy="9.5" r="6.6" fill="none" stroke="url(#rg)" stroke-width="2"/>
<path d="M13.5 5 L4.5 14" stroke="#B81E0E" stroke-width="3.4"/><path d="M13.5 5 L4.5 14" stroke="#E8603A" stroke-width="1.8"/></svg>
<svg style="left:275px;top:116px" width="18" height="18" viewBox="0 0 18 18"><path d="M9 8 V4.5 A3.5 3.5 0 0 1 16 4.5 V6.5" fill="none" stroke="#7E7E7E" stroke-width="2.4"/>
<path d="M9 8 V4.5 A3.5 3.5 0 0 1 16 4.5 V6.5" fill="none" stroke="#E8E8E8" stroke-width="0.8"/>
<defs><linearGradient id="gg" x1="0" y1="0" x2="0" y2="1"><stop offset="0" stop-color="#FCE680"/><stop offset="1" stop-color="#E0B020"/></linearGradient></defs>
<rect x="1.5" y="7" width="10" height="9.5" rx="1" fill="url(#gg)" stroke="#C8900E" stroke-width="1.1"/>
<path d="M6.5 10.5 L5 11.8 L6.5 13" fill="#B07A10" stroke="#B07A10" stroke-width="0.8"/></svg>
<svg style="left:334px;top:120px" width="17" height="10" viewBox="0 0 17 10"><rect x="1" y="1" width="15" height="8" rx="1.5" fill="#fff" stroke="#7E7E7E" stroke-width="1.1"/>
<rect x="3" y="4" width="2" height="2" fill="#5A5A5A"/><rect x="6" y="4" width="2" height="2" fill="#5A5A5A"/><rect x="9" y="4" width="2" height="2" fill="#5A5A5A"/><rect x="11.5" y="3" width="3" height="4" fill="#ECECEC"/></svg>
<svg style="left:437px;top:116px" width="18" height="18" viewBox="0 0 18 18"><path d="M1.5 1.5 H16.5 V16.5 H2.5 L1.5 15.5 Z" fill="#9A5AC8" stroke="#8040B0" stroke-width="0.8"/>
<rect x="4.5" y="2" width="9.5" height="7.5" fill="#F2F4F8"/>
<rect x="2.5" y="3" width="1" height="1.2" fill="#fff"/><rect x="14.8" y="3" width="1" height="1.2" fill="#fff"/>
<defs><linearGradient id="sg" x1="0" x2="1"><stop offset="0" stop-color="#F0F0F0"/><stop offset="1" stop-color="#808080"/></linearGradient></defs>
<rect x="5.5" y="11.5" width="8" height="5" fill="url(#sg)"/><rect x="7" y="11.5" width="1.8" height="3.5" fill="#9A5AC8"/></svg>
<svg style="left:526px;top:117px" width="17" height="17" viewBox="0 0 17 17"><defs><linearGradient id="xg" x1="0" y1="0" x2="0" y2="1"><stop offset="0" stop-color="#F07840"/><stop offset="1" stop-color="#D03A18"/></linearGradient></defs>
<path d="M1.5 4.5 L4.5 1.5 L8.5 5.5 L12.5 1.5 L15.5 4.5 L11.5 8.5 L15.5 12.5 L12.5 15.5 L8.5 11.5 L4.5 15.5 L1.5 12.5 L5.5 8.5 Z" fill="url(#xg)" stroke="#B82412" stroke-width="1.1" stroke-linejoin="round"/></svg>
<span style="left:23.5px;top:7.69px;font-size:11px;font-weight:bold;color:#fff;transform:scaleX(0.9815);-webkit-text-stroke:0.3px #fff;">AccuSPHERE Solo</span>
<span style="left:160.5px;top:7.69px;font-size:11px;font-weight:bold;color:#fff;transform:scaleX(1.1236);-webkit-text-stroke:0.3px #fff;">[User Management]</span>
<span style="left:38.5px;top:29.69px;font-size:11px;color:#000;transform:scaleX(0.9699);">File</span>
<span style="left:74.0px;top:29.69px;font-size:11px;color:#000;transform:scaleX(0.9807);">View</span>
<span style="left:114.9px;top:29.69px;font-size:11px;color:#000;transform:scaleX(0.9849);">Equipment</span>
<span style="left:183.8px;top:29.69px;font-size:11px;color:#000;transform:scaleX(0.9846);">Language</span>
<span style="left:249.7px;top:29.69px;font-size:11px;color:#000;transform:scaleX(0.9905);">Windows</span>
<span style="left:311.7px;top:29.69px;font-size:11px;color:#000;transform:scaleX(0.9812);">Help</span>
<span style="left:83.5px;top:57.69px;font-size:11px;color:#000;transform:scaleX(0.9814);">Customers</span>
<span style="left:161.5px;top:57.69px;font-size:11px;color:#000;transform:scaleX(0.9753);">Specifications</span>
<span style="left:259.0px;top:57.69px;font-size:11px;color:#000;transform:scaleX(0.9738);">Loads</span>
<span style="left:314.0px;top:57.69px;font-size:11px;color:#000;transform:scaleX(0.9534);">Manage Drums</span>
<span style="left:412.1px;top:57.69px;font-size:11px;color:#8E8C88;transform:scaleX(0.9739);">Multi-Dashboard</span>
<span style="left:516.9px;top:57.69px;font-size:11px;color:#000;transform:scaleX(1.0070);">Reports</span>
<span style="left:588.3px;top:57.69px;font-size:11px;color:#000;transform:scaleX(0.9784);">Administration</span>
<span style="left:1153.5px;top:57.69px;font-size:11px;color:#000;transform:scaleX(0.9780);">Print Screen</span>
<span style="left:13.5px;top:89.69px;font-size:11px;color:#000;transform:scaleX(1.0708);">Selected Equipment:</span>
<span style="left:132.5px;top:89.69px;font-size:11px;font-weight:bold;color:#000;transform:scaleX(1.1042);">&lt;none&gt;</span>
<span style="left:352.1px;top:89.69px;font-size:11px;color:#858585;transform:scaleX(0.9547);">Chamber</span>
<span style="left:421.8px;top:89.69px;font-size:11px;color:#858585;transform:scaleX(0.9738);">Loads</span>
<span style="left:476.5px;top:89.69px;font-size:11px;color:#858585;transform:scaleX(1.0166);">Events</span>
<span style="left:546.5px;top:89.69px;font-size:11px;color:#858585;transform:scaleX(1.0060);">Charts</span>
<span style="left:620.5px;top:89.69px;font-size:11px;color:#858585;transform:scaleX(0.9735);">Calibration</span>
<span style="left:697.9px;top:89.69px;font-size:11px;color:#858585;transform:scaleX(0.9681);">Equipment/Phase Config</span>
<span style="left:841.5px;top:89.69px;font-size:11px;color:#858585;transform:scaleX(0.9883);">Dashboard</span>
<span style="left:1114.1px;top:87.59px;font-size:17.5px;font-weight:bold;font-style:italic;color:#000;transform:scaleX(1.0692);-webkit-text-stroke:0.5px #000;">General</span>
<span style="left:33.5px;top:119.69px;font-size:11px;color:#000;transform:scaleX(0.9677);">Add New</span>
<span style="left:103.1px;top:119.69px;font-size:11px;color:#000;transform:scaleX(1.0122);">Edit</span>
<span style="left:148.2px;top:119.69px;font-size:11px;color:#8E8C88;transform:scaleX(1.0398);">Activate</span>
<span style="left:215.0px;top:119.69px;font-size:11px;color:#000;transform:scaleX(1.0138);">Deactivate</span>
<span style="left:294.1px;top:119.69px;font-size:11px;color:#000;transform:scaleX(0.9576);">Unlock</span>
<span style="left:351.8px;top:119.69px;font-size:11px;color:#000;transform:scaleX(0.9764);">Reset Password</span>
<span style="left:456.5px;top:119.69px;font-size:11px;color:#000;transform:scaleX(0.9532);">Save Groups</span>
<span style="left:544.2px;top:119.69px;font-size:11px;color:#000;transform:scaleX(0.9812);">Delete</span>
<span style="left:30px;top:144.84px;font-size:12px;color:#000;transform:scaleX(0.8600);">Administrator</span>
<span style="left:30px;top:159.84px;font-size:12px;color:#000;transform:scaleX(0.8600);">Cycle Approver</span>
<span style="left:30px;top:174.84px;font-size:12px;color:#000;transform:scaleX(0.8600);">Cycle Reviewer</span>
<span style="left:30px;top:189.84px;font-size:12px;color:#000;transform:scaleX(0.8600);">FATGroup</span>
<span style="left:30px;top:204.84px;font-size:12px;color:#000;transform:scaleX(0.8600);">Maintenance</span>
<span style="left:30px;top:219.84px;font-size:12px;color:#000;transform:scaleX(0.8600);">Operators</span>
<span style="left:30px;top:234.84px;font-size:12px;color:#000;transform:scaleX(0.8600);">Reporter</span>
<span style="left:30px;top:249.84px;font-size:12px;color:#000;transform:scaleX(0.8600);">Super</span>
<span style="left:30px;top:264.84px;font-size:12px;color:#000;transform:scaleX(0.8600);">UnitTestGroup</span>
<span style="left:30px;top:279.84px;font-size:12px;color:#000;transform:scaleX(0.8600);">Viewer</span>
<span style="left:267.1px;top:153.84px;font-size:12px;color:#000;transform:scaleX(0.8577);">UserName</span>
<span style="left:367.1px;top:153.84px;font-size:12px;color:#000;transform:scaleX(0.8631);">Full Name</span>
<span style="left:467.1px;top:153.84px;font-size:12px;color:#000;transform:scaleX(0.8396);">Email</span>
<span style="left:567.4px;top:146.84px;font-size:12px;color:#000;transform:scaleX(0.8600);">Password Last</span>
<span style="left:567.4px;top:159.84px;font-size:12px;color:#000;transform:scaleX(0.8600);">Modified</span>
<span style="left:707.3px;top:146.84px;font-size:12px;color:#000;transform:scaleX(0.8600);">Login</span>
<span style="left:706.8px;top:159.84px;font-size:12px;color:#000;transform:scaleX(0.8699);">Attempts</span>
<span style="left:807.0px;top:153.84px;font-size:12px;color:#000;transform:scaleX(0.9089);">Deactivated</span>
<span style="left:906.9px;top:153.84px;font-size:12px;color:#000;transform:scaleX(0.8827);">Date Created</span>
<span style="left:263.5px;top:178.84px;font-size:12px;color:#fff;transform:scaleX(0.8600);">admin</span>
<span style="left:363px;top:178.84px;font-size:12px;color:#000;transform:scaleX(0.8600);">admin</span>
<span style="left:563.8px;top:178.84px;font-size:12px;color:#000;transform:scaleX(0.9295);">26/01/2011 7:32 AM</span>
<span style="left:704.5px;top:178.84px;font-size:12px;color:#000;transform:scaleX(0.9500);">0</span>
<span style="left:904.2px;top:178.84px;font-size:12px;color:#000;transform:scaleX(0.9295);">19/07/2010 9:31 AM</span>
<span style="left:263.5px;top:200.84px;font-size:12px;color:#000;transform:scaleX(0.8600);">AJUQQA</span>
<span style="left:363px;top:200.84px;font-size:12px;color:#000;transform:scaleX(0.8600);">Ahmad Juqqa</span>
<span style="left:563.8px;top:200.84px;font-size:12px;color:#000;transform:scaleX(0.9295);">22/10/2012 8:35 AM</span>
<span style="left:704.5px;top:200.84px;font-size:12px;color:#000;transform:scaleX(0.9500);">0</span>
<span style="left:904.2px;top:200.84px;font-size:12px;color:#000;transform:scaleX(0.9295);">31/12/2010 8:27 AM</span>
<span style="left:263.5px;top:222.84px;font-size:12px;color:#000;transform:scaleX(0.8707);">AJUQQA7</span>
<span style="left:363px;top:222.84px;font-size:12px;color:#000;transform:scaleX(0.8600);">Ahmad Juqqa</span>
<span style="left:563.8px;top:222.84px;font-size:12px;color:#000;transform:scaleX(0.9307);">26/03/2012 11:49 AM</span>
<span style="left:704.5px;top:222.84px;font-size:12px;color:#000;transform:scaleX(0.9500);">0</span>
<span style="left:904.2px;top:222.84px;font-size:12px;color:#000;transform:scaleX(0.9295);">31/03/2010 4:18 PM</span>
<span style="left:263.5px;top:244.84px;font-size:12px;color:#000;transform:scaleX(0.8707);">AJUQQA8</span>
<span style="left:363px;top:244.84px;font-size:12px;color:#000;transform:scaleX(0.8600);">Ahmad Juqqa</span>
<span style="left:563.8px;top:244.84px;font-size:12px;color:#000;transform:scaleX(0.9295);">31/03/2010 4:18 PM</span>
<span style="left:704.5px;top:244.84px;font-size:12px;color:#000;transform:scaleX(0.9500);">0</span>
<span style="left:904.2px;top:244.84px;font-size:12px;color:#000;transform:scaleX(0.9295);">31/03/2010 4:19 PM</span>
<span style="left:263.5px;top:266.84px;font-size:12px;color:#000;transform:scaleX(0.8707);">AJUQQA9</span>
<span style="left:363px;top:266.84px;font-size:12px;color:#000;transform:scaleX(0.8679);">ahmad juqqa9</span>
<span style="left:563.8px;top:266.84px;font-size:12px;color:#000;transform:scaleX(0.9295);">01/04/2010 8:49 AM</span>
<span style="left:704.5px;top:266.84px;font-size:12px;color:#000;transform:scaleX(0.9500);">0</span>
<span style="left:904.2px;top:266.84px;font-size:12px;color:#000;transform:scaleX(0.9295);">01/04/2010 8:50 AM</span>
<span style="left:263.5px;top:288.84px;font-size:12px;color:#000;transform:scaleX(0.8600);">DemoUser</span>
<span style="left:363px;top:288.84px;font-size:12px;color:#000;transform:scaleX(0.8600);">Demonstration U...</span>
<span style="left:563.8px;top:288.84px;font-size:12px;color:#000;transform:scaleX(0.9295);">03/08/2011 9:10 AM</span>
<span style="left:704.5px;top:288.84px;font-size:12px;color:#000;transform:scaleX(0.9500);">0</span>
<span style="left:904.2px;top:288.84px;font-size:12px;color:#000;transform:scaleX(0.9295);">03/08/2011 9:11 AM</span>
<span style="left:263.5px;top:310.84px;font-size:12px;color:#000;transform:scaleX(0.9050);">fat01</span>
<span style="left:363px;top:310.84px;font-size:12px;color:#000;transform:scaleX(0.8726);">User 01 for F.A.T.</span>
<span style="left:563.8px;top:310.84px;font-size:12px;color:#000;transform:scaleX(0.9295);">17/05/2012 2:46 PM</span>
<span style="left:704.5px;top:310.84px;font-size:12px;color:#000;transform:scaleX(0.9500);">0</span>
<span style="left:904.2px;top:310.84px;font-size:12px;color:#000;transform:scaleX(0.9295);">26/03/2012 9:52 AM</span>
<span style="left:263.5px;top:332.84px;font-size:12px;color:#000;transform:scaleX(0.9050);">fat02</span>
<span style="left:363px;top:332.84px;font-size:12px;color:#000;transform:scaleX(0.8741);">User 02 for FAT</span>
<span style="left:563.8px;top:332.84px;font-size:12px;color:#000;transform:scaleX(0.9295);">26/03/2012 3:38 PM</span>
<span style="left:704.5px;top:332.84px;font-size:12px;color:#000;transform:scaleX(0.9500);">0</span>
<span style="left:904.2px;top:332.84px;font-size:12px;color:#000;transform:scaleX(0.9295);">26/03/2012 3:39 PM</span>
<span style="left:263.5px;top:354.84px;font-size:12px;color:#000;transform:scaleX(0.8705);">FATPRIV2</span>
<span style="left:363px;top:354.84px;font-size:12px;color:#000;transform:scaleX(0.8600);">Performed By User</span>
<span style="left:563.8px;top:354.84px;font-size:12px;color:#000;transform:scaleX(0.9295);">28/01/2011 7:25 AM</span>
<span style="left:704.5px;top:354.84px;font-size:12px;color:#000;transform:scaleX(0.9500);">0</span>
<span style="left:904.2px;top:354.84px;font-size:12px;color:#000;transform:scaleX(0.9295);">28/01/2011 7:25 AM</span>
<span style="left:263.5px;top:376.84px;font-size:12px;color:#000;transform:scaleX(0.8705);">FATPRIV4</span>
<span style="left:363px;top:376.84px;font-size:12px;color:#000;transform:scaleX(0.8600);">QA User</span>
<span style="left:563.8px;top:376.84px;font-size:12px;color:#000;transform:scaleX(0.9295);">28/01/2011 7:18 AM</span>
<span style="left:704.5px;top:376.84px;font-size:12px;color:#000;transform:scaleX(0.9500);">0</span>
<span style="left:904.2px;top:376.84px;font-size:12px;color:#000;transform:scaleX(0.9295);">28/01/2011 7:18 AM</span>
<span style="left:263.5px;top:398.84px;font-size:12px;color:#000;transform:scaleX(0.8600);">momatsu</span>
<span style="left:363px;top:398.84px;font-size:12px;color:#000;transform:scaleX(0.8600);">Mike</span>
<span style="left:463px;top:398.84px;font-size:12px;color:#000;transform:scaleX(0.8600);">michaelo@konne...</span>
<span style="left:563.8px;top:398.84px;font-size:12px;color:#000;transform:scaleX(0.9307);">22/10/2012 12:46 PM</span>
<span style="left:704.5px;top:398.84px;font-size:12px;color:#000;transform:scaleX(0.9500);">0</span>
<span style="left:904.2px;top:398.84px;font-size:12px;color:#000;transform:scaleX(0.9295);">01/03/2012 6:01 PM</span>
<span style="left:263.5px;top:420.84px;font-size:12px;color:#000;transform:scaleX(0.8600);">NEWUSER</span>
<span style="left:363px;top:420.84px;font-size:12px;color:#000;transform:scaleX(0.8600);">Test</span>
<span style="left:563.8px;top:420.84px;font-size:12px;color:#000;transform:scaleX(0.9295);">19/01/2011 7:00 PM</span>
<span style="left:704.5px;top:420.84px;font-size:12px;color:#000;transform:scaleX(0.9500);">1</span>
<span style="left:904.2px;top:420.84px;font-size:12px;color:#000;transform:scaleX(0.9295);">22/12/2010 7:53 AM</span>
<span style="left:263.5px;top:442.84px;font-size:12px;color:#000;transform:scaleX(0.8684);">newusertest1</span>
<span style="left:363px;top:442.84px;font-size:12px;color:#000;transform:scaleX(0.8600);">new user test</span>
<span style="left:563.8px;top:442.84px;font-size:12px;color:#000;transform:scaleX(0.9295);">21/06/2012 9:12 AM</span>
<span style="left:704.5px;top:442.84px;font-size:12px;color:#000;transform:scaleX(0.9500);">0</span>
<span style="left:904.2px;top:442.84px;font-size:12px;color:#000;transform:scaleX(0.9295);">21/06/2012 9:12 AM</span>
<span style="left:263.5px;top:464.84px;font-size:12px;color:#000;transform:scaleX(0.8600);">nhijazi</span>
<span style="left:363px;top:464.84px;font-size:12px;color:#000;transform:scaleX(0.8600);">Nader Hijazi</span>
<span style="left:463px;top:464.84px;font-size:12px;color:#000;transform:scaleX(0.8600);">naderh@konnexi...</span>
<span style="left:563.8px;top:464.84px;font-size:12px;color:#000;transform:scaleX(0.9307);">02/10/2012 11:00 AM</span>
<span style="left:704.5px;top:464.84px;font-size:12px;color:#000;transform:scaleX(0.9500);">0</span>
<span style="left:904.2px;top:464.84px;font-size:12px;color:#000;transform:scaleX(0.9307);">10/06/2011 11:14 AM</span>
<span style="left:263.5px;top:486.84px;font-size:12px;color:#000;transform:scaleX(0.8748);">nhijazi2</span>
<span style="left:363px;top:486.84px;font-size:12px;color:#000;transform:scaleX(0.8600);">Nader Hijazi</span>
<span style="left:563.8px;top:486.84px;font-size:12px;color:#000;transform:scaleX(0.9295);">12/03/2012 3:56 PM</span>
<span style="left:704.5px;top:486.84px;font-size:12px;color:#000;transform:scaleX(0.9500);">0</span>
<span style="left:904.2px;top:486.84px;font-size:12px;color:#000;transform:scaleX(0.9307);">03/08/2011 11:34 AM</span>
<span style="left:263.5px;top:508.84px;font-size:12px;color:#000;transform:scaleX(0.8748);">nhijazi3</span>
<span style="left:363px;top:508.84px;font-size:12px;color:#000;transform:scaleX(0.8600);">Nader Hijazi</span>
<span style="left:563.8px;top:508.84px;font-size:12px;color:#000;transform:scaleX(0.9295);">08/04/2012 5:00 PM</span>
<span style="left:704.5px;top:508.84px;font-size:12px;color:#000;transform:scaleX(0.9500);">0</span>
<span style="left:904.2px;top:508.84px;font-size:12px;color:#000;transform:scaleX(0.9295);">14/03/2012 5:00 PM</span>
<span style="left:263.5px;top:530.84px;font-size:12px;color:#000;transform:scaleX(0.8713);">OQPRIV1</span>
<span style="left:363px;top:530.84px;font-size:12px;color:#000;transform:scaleX(0.8660);">OQ Privilege 1 U...</span>
<span style="left:563.8px;top:530.84px;font-size:12px;color:#000;transform:scaleX(0.9295);">13/01/2010 8:57 AM</span>
<span style="left:704.5px;top:530.84px;font-size:12px;color:#000;transform:scaleX(0.9500);">0</span>
<span style="left:904.2px;top:530.84px;font-size:12px;color:#000;transform:scaleX(0.9307);">27/01/2011 11:12 AM</span>
<span style="left:263.5px;top:552.84px;font-size:12px;color:#000;transform:scaleX(0.8777);">peter2</span>
<span style="left:363px;top:552.84px;font-size:12px;color:#000;transform:scaleX(0.8600);">Peter Veselovsky</span>
<span style="left:563.8px;top:552.84px;font-size:12px;color:#000;transform:scaleX(0.9295);">21/06/2012 9:13 AM</span>
<span style="left:704.5px;top:552.84px;font-size:12px;color:#000;transform:scaleX(0.9500);">11</span>
<span style="left:904.2px;top:552.84px;font-size:12px;color:#000;transform:scaleX(0.9295);">21/06/2012 9:14 AM</span>
<span style="left:263.5px;top:574.84px;font-size:12px;color:#000;transform:scaleX(0.8600);">SysMonitor</span>
<span style="left:363px;top:574.84px;font-size:12px;color:#000;transform:scaleX(0.8600);">&gt;System Monitor</span>
<span style="left:563.8px;top:574.84px;font-size:12px;color:#000;transform:scaleX(0.9295);">13/03/2012 4:23 PM</span>
<span style="left:704.5px;top:574.84px;font-size:12px;color:#000;transform:scaleX(0.9500);">0</span>
<span style="left:904.2px;top:574.84px;font-size:12px;color:#000;transform:scaleX(0.9295);">13/03/2012 4:23 PM</span>
<span style="left:263.5px;top:596.84px;font-size:12px;color:#000;transform:scaleX(0.8600);">System</span>
<span style="left:363px;top:596.84px;font-size:12px;color:#000;transform:scaleX(0.8600);">Process Controller</span>
<span style="left:563.8px;top:596.84px;font-size:12px;color:#000;transform:scaleX(0.9295);">13/10/2011 9:36 AM</span>
<span style="left:704.5px;top:596.84px;font-size:12px;color:#000;transform:scaleX(0.9500);">0</span>
<span style="left:904.2px;top:596.84px;font-size:12px;color:#000;transform:scaleX(0.9295);">13/10/2011 9:36 AM</span>
<span style="left:263.5px;top:618.84px;font-size:12px;color:#000;transform:scaleX(0.8600);">testadd</span>
<span style="left:563.8px;top:618.84px;font-size:12px;color:#000;transform:scaleX(0.9307);">21/06/2012 10:35 AM</span>
<span style="left:704.5px;top:618.84px;font-size:12px;color:#000;transform:scaleX(0.9500);">0</span>
<span style="left:904.2px;top:618.84px;font-size:12px;color:#000;transform:scaleX(0.9307);">21/06/2012 10:35 AM</span>
<span style="left:263.5px;top:640.84px;font-size:12px;color:#000;transform:scaleX(0.8600);">testuser</span>
<span style="left:363px;top:640.84px;font-size:12px;color:#000;transform:scaleX(0.8600);">test user</span>
<span style="left:563.8px;top:640.84px;font-size:12px;color:#000;transform:scaleX(0.9295);">20/03/2012 3:58 PM</span>
<span style="left:704.5px;top:640.84px;font-size:12px;color:#000;transform:scaleX(0.9500);">0</span>
<span style="left:904.2px;top:640.84px;font-size:12px;color:#000;transform:scaleX(0.9307);">06/03/2012 12:36 PM</span>
<span style="left:263.5px;top:662.84px;font-size:12px;color:#000;transform:scaleX(0.8722);">testuser1</span>
<span style="left:363px;top:662.84px;font-size:12px;color:#000;transform:scaleX(0.8600);">test</span>
<span style="left:563.8px;top:662.84px;font-size:12px;color:#000;transform:scaleX(0.9295);">21/06/2012 1:18 PM</span>
<span style="left:704.5px;top:662.84px;font-size:12px;color:#000;transform:scaleX(0.9500);">0</span>
<span style="left:904.2px;top:662.84px;font-size:12px;color:#000;transform:scaleX(0.9295);">21/06/2012 1:18 PM</span>
<span style="left:263.5px;top:684.84px;font-size:12px;color:#000;transform:scaleX(0.8600);">unittester</span>
<span style="left:363px;top:684.84px;font-size:12px;color:#000;transform:scaleX(0.8600);">Unit Tester</span>
<span style="left:563.8px;top:684.84px;font-size:12px;color:#000;transform:scaleX(0.9307);">19/03/2012 10:52 AM</span>
<span style="left:704.5px;top:684.84px;font-size:12px;color:#000;transform:scaleX(0.9500);">0</span>
<span style="left:904.2px;top:684.84px;font-size:12px;color:#000;transform:scaleX(0.9307);">19/03/2012 10:53 AM</span>
<span style="left:263.5px;top:706.84px;font-size:12px;color:#000;transform:scaleX(0.9016);">user000</span>
<span style="left:363px;top:706.84px;font-size:12px;color:#000;transform:scaleX(0.8600);">Us Er</span>
<span style="left:563.8px;top:706.84px;font-size:12px;color:#000;transform:scaleX(0.9295);">18/07/2012 2:56 PM</span>
<span style="left:704.5px;top:706.84px;font-size:12px;color:#000;transform:scaleX(0.9500);">0</span>
<span style="left:904.2px;top:706.84px;font-size:12px;color:#000;transform:scaleX(0.9295);">18/07/2012 2:56 PM</span>
<div style="left:263px;top:110px;width:71px;height:29px;box-sizing:border-box;border:3px solid #E8141C;border-radius:7px"></div>
</body></html>
